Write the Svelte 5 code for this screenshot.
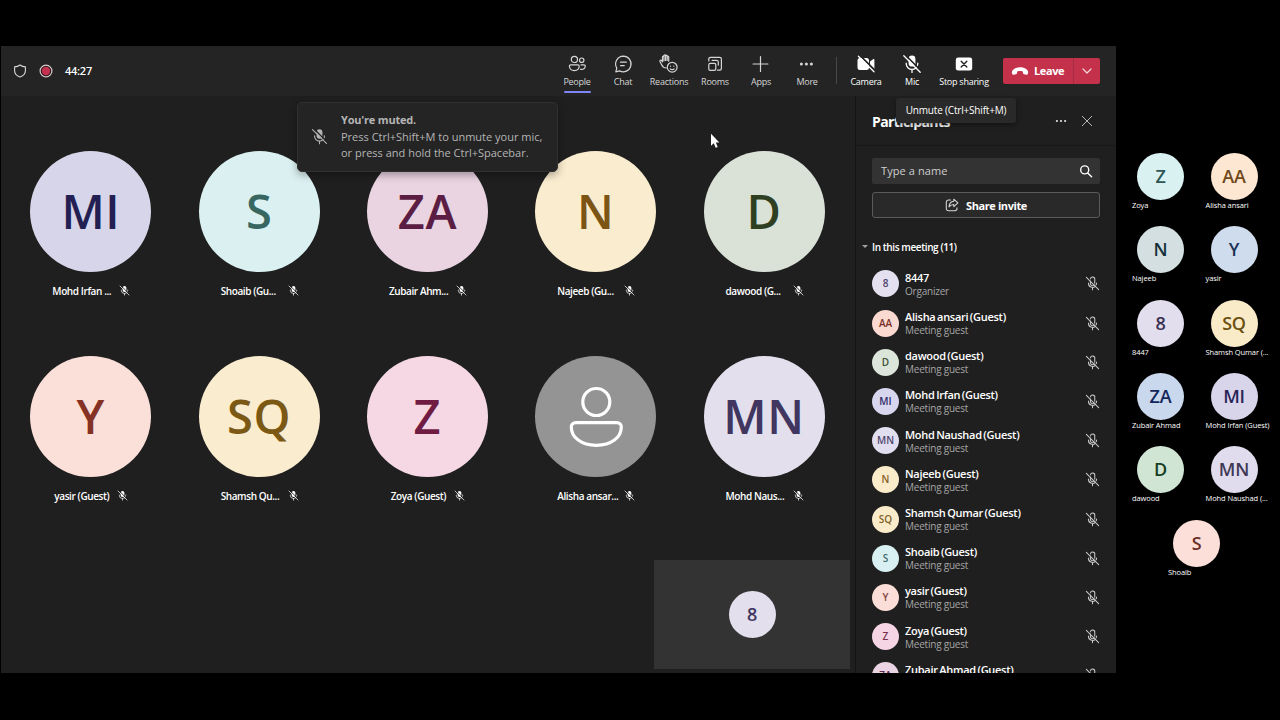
<script>
  const tools = [
    { id: 'people', label: 'People', active: true },
    { id: 'chat', label: 'Chat' },
    { id: 'reactions', label: 'Reactions' },
    { id: 'rooms', label: 'Rooms' },
    { id: 'apps', label: 'Apps' },
    { id: 'more', label: 'More' }
  ];

  const tiles = [
    { initials: 'MI', label: 'Mohd Irfan ...', bg: '#d7d5e9', fg: '#231f52', cut: true },
    { initials: 'S', label: 'Shoaib (Gu...', bg: '#dbf1f1', fg: '#386661', cut: true },
    { initials: 'ZA', label: 'Zubair Ahm...', bg: '#ead4e2', fg: '#5b1d43', cut: true },
    { initials: 'N', label: 'Najeeb (Gu...', bg: '#faeccf', fg: '#7c5515', cut: true },
    { initials: 'D', label: 'dawood (G...', bg: '#dae2d8', fg: '#2f4022', cut: true },
    { initials: 'Y', label: 'yasir (Guest)', bg: '#fbe0da', fg: '#853225' },
    { initials: 'SQ', label: 'Shamsh Qu...', bg: '#faeccf', fg: '#7b5814', cut: true },
    { initials: 'Z', label: 'Zoya (Guest)', bg: '#f5d8e3', fg: '#6f1b42' },
    { initials: '', label: 'Alisha ansar...', bg: '#949494', fg: '#ffffff', cut: true },
    { initials: 'MN', label: 'Mohd Naus...', bg: '#e3dfed', fg: '#40365f', cut: true }
  ];

  const people = [
    { initials: '8', name: '8447', role: 'Organizer', bg: '#e4e0f0', fg: '#4a4168' },
    { initials: 'AA', name: 'Alisha ansari (Guest)', bg: '#f9d9d0', fg: '#7b3228' },
    { initials: 'D', name: 'dawood (Guest)', bg: '#dbe5da', fg: '#3e5135' },
    { initials: 'MI', name: 'Mohd Irfan (Guest)', bg: '#d7d6ee', fg: '#302b68' },
    { initials: 'MN', name: 'Mohd Naushad (Guest)', bg: '#e1def0', fg: '#50466f' },
    { initials: 'N', name: 'Najeeb (Guest)', bg: '#faecca', fg: '#84622a' },
    { initials: 'SQ', name: 'Shamsh Qumar (Guest)', bg: '#faecca', fg: '#80632a' },
    { initials: 'S', name: 'Shoaib (Guest)', bg: '#d8f0f1', fg: '#3e6c6c' },
    { initials: 'Y', name: 'yasir (Guest)', bg: '#fbded7', fg: '#81463b' },
    { initials: 'Z', name: 'Zoya (Guest)', bg: '#f5d5e4', fg: '#78304f' },
    { initials: 'ZA', name: 'Zubair Ahmad (Guest)', bg: '#ead3e2', fg: '#602a4c' }
  ];

  const roster = [
    { initials: 'Z', name: 'Zoya', bg: '#d9f1f1', fg: '#2e5553' },
    { initials: 'AA', name: 'Alisha ansari', bg: '#fde6d2', fg: '#704719' },
    { initials: 'N', name: 'Najeeb', bg: '#d3dfe1', fg: '#153039' },
    { initials: 'Y', name: 'yasir', bg: '#cedced', fg: '#1d3254' },
    { initials: '8', name: '8447', bg: '#e2deed', fg: '#3a3050' },
    { initials: 'SQ', name: 'Shamsh Qumar (...', bg: '#f9eac8', fg: '#6b4f10' },
    { initials: 'ZA', name: 'Zubair Ahmad', bg: '#c9d8ec', fg: '#13265c' },
    { initials: 'MI', name: 'Mohd Irfan (Guest)', bg: '#d8d5ea', fg: '#292457' },
    { initials: 'D', name: 'dawood', bg: '#d1e5d5', fg: '#153d1f' },
    { initials: 'MN', name: 'Mohd Naushad (...', bg: '#e0dced', fg: '#403757' },
    { initials: 'S', name: 'Shoaib', bg: '#fbdfd8', fg: '#6b2f29' }
  ];
</script>

{#snippet micFilled(size, back)}
  <svg width={size} height={size} viewBox="0 0 20 20" fill="none" stroke-linecap="round">
    <rect x="6.6" y="1.6" width="6.8" height="11" rx="3.4" fill="currentColor" />
    <path d="M4.2 9.2v.4a5.8 5.8 0 0 0 11.6 0v-.4M10 15.6V18.4" stroke="currentColor" stroke-width="1.3" />
    <path d="M3.4 1l15.6 15.6" stroke={back} stroke-width="1.6" />
    <path d="M1.8 1.8l16.4 16.4" stroke="currentColor" stroke-width="1.3" />
  </svg>
{/snippet}

{#snippet micOutline()}
  <svg width="15" height="15" viewBox="0 0 20 20" fill="none" stroke="currentColor" stroke-width="1.4" stroke-linecap="round">
    <path d="M7.2 6.8V10a2.9 2.9 0 0 0 5 2M7.3 3.8A2.9 2.9 0 0 1 13 4.9v4.7" />
    <path d="M4.6 9.2v.4a5.4 5.4 0 0 0 9.4 3.8M15.4 9.2c0 1-.1 1.7-.5 2.5M10 15.2V18.4" />
    <path d="M1.8 1.8l16.4 16.4" />
  </svg>
{/snippet}

{#snippet toolIcon(id)}
  <svg width="20" height="20" viewBox="0 0 20 20" fill="none" stroke="currentColor" stroke-width="1.2" stroke-linecap="round" stroke-linejoin="round">
    {#if id === 'people'}
      <circle cx="7.4" cy="5.400" r="3.1" />
      <circle cx="14.700" cy="6.200" r="2.2" />
      <path d="M3.700 10.800h7.200c.8 0 1.300.6 1.300 1.300 0 2.700-2 4.500-4.900 4.500s-4.900-1.800-4.900-4.500c0-.7.6-1.300 1.300-1.300zM14 10.800h3c.8 0 1.300.6 1.300 1.300 0 2.300-1.900 3.700-4.800 3.300" />
    {:else if id === 'chat'}
      <path d="M10.300 2.200a7.800 7.800 0 1 1-3.700 14.700L2.800 17.800l1-3.700A7.800 7.800 0 0 1 10.300 2.200zM7.500 8.200h5.800M7.500 11.600h3.800" />
    {:else if id === 'reactions'}
      <circle cx="13.200" cy="13.2" r="4.9" />
      <path d="M11.300 14.800c1 1.100 2.800 1.100 3.800 0M11.500 12v.2M14.900 12v.2" />
      <path d="M7.300 14c-2.300 0-3.800-1.200-4.700-3.200L1 7.400c-.4-1 .8-1.700 1.500-.9l1 1.300V3c0-1.100 1.500-1.100 1.500 0V1.700c0-1.100 1.600-1.100 1.600 0V2c0-1 1.600-1 1.600 0v1.200c0-1 1.500-1 1.500 0v4M5 2.800v4M6.600 2v4.500M8.200 2.800v3.700" />
    {:else if id === 'rooms'}
      <path d="M3.800 7V5a1.700 1.700 0 0 1 1.700-1.700h9.200A1.700 1.700 0 0 1 16.400 5v9.500a1.700 1.700 0 0 1-1.700 1.700h-2.200" />
      <path d="M7.200 6.400h4.400a1.700 1.700 0 0 1 1.700 1.700v3" />
      <rect x="3.800" y="9.300" width="7" height="7" rx="1.400" />
    {:else if id === 'apps'}
      <path d="M9.500 2.600v14.800M2.100 10h14.800" />
    {:else}
      <g fill="currentColor" stroke="none">
        <circle cx="4.400" cy="10" r="1.500" /><circle cx="9.400" cy="10" r="1.500" /><circle cx="14.400" cy="10" r="1.500" />
      </g>
    {/if}
  </svg>
{/snippet}

<div class="screen">
  <main class="window">
    <header class="toolbar">
      <div class="status">
        <svg width="14" height="14" viewBox="0 0 14 14" fill="none" stroke="#d8d8d8" stroke-width="1.1" stroke-linejoin="round">
          <path d="M7 1c1.600 1.200 3.300 1.800 5.400 1.900v3.800c0 2.900-1.800 5-5.400 6.300-3.600-1.300-5.400-3.400-5.400-6.300V2.900C3.700 2.800 5.400 2.200 7 1z" />
        </svg>
        <svg width="14" height="14" viewBox="0 0 14 14">
          <circle cx="7" cy="7" r="5.900" fill="#241b1e" stroke="#ddc9cb" stroke-width="1.200" />
          <circle cx="7" cy="7" r="4.200" fill="#c4314f" />
        </svg>
        <span class="timer">44:27</span>
      </div>
      <nav class="tools">
        {#each tools as tool}
          <button class="tool" class:active={tool.active}>
            {@render toolIcon(tool.id)}
            <span>{tool.label}</span>
          </button>
        {/each}
        <i class="divider"></i>
        <button class="tool bright">
          <svg width="20" height="20" viewBox="0 0 20 20" stroke-linecap="round">
            <path fill="currentColor" d="M4 4h6.500a2.500 2.500 0 0 1 2.500 2.500v7a2.500 2.500 0 0 1-2.500 2.500H4A2.500 2.500 0 0 1 1.500 13.500v-7A2.500 2.500 0 0 1 4 4zM14 7.500l3.400-2.400c.5-.3 1 0 1 .5v8.800c0 .5-.5.8-1 .5L14 12.500z" />
            <path d="M4.200 1.600l14.600 14.600" stroke="#242424" stroke-width="1.700" />
            <path d="M2.400 2.200l15.600 15.600" stroke="currentColor" stroke-width="1.300" />
          </svg>
          <span>Camera</span>
        </button>
        <button class="tool bright">
          {@render micFilled(20, '#242424')}
          <span>Mic</span>
        </button>
        <button class="tool bright wide">
          <svg width="20" height="20" viewBox="0 0 20 20">
            <rect x="1.800" y="3.600" width="16.400" height="13" rx="2.400" fill="currentColor" />
            <path d="M7.200 7.300l5.600 5.600M12.800 7.300l-5.600 5.600" stroke="#242424" stroke-width="1.400" stroke-linecap="round" />
          </svg>
          <span>Stop sharing</span>
        </button>
      </nav>
      <div class="leave">
        <button class="leave-main">
          <svg width="18" height="10" viewBox="0 0 18 10" fill="#fff">
            <path d="M9 1.300c3.900 0 7.400 1.700 8 4.300.2 1 .1 1.800-.2 2.500-.2.500-.7.700-1.200.6l-2.500-.5c-.6-.1-.9-.5-1-1L11.700 5.500C10 4.900 8 4.900 6.300 5.500L5.900 7.200c-.1.500-.4.900-1 1l-2.500.5c-.5.1-1-.1-1.200-.6C.9 7.400.8 6.600 1 5.600 1.600 3 5.100 1.300 9 1.300z" />
          </svg>
          <span>Leave</span>
        </button>
        <button class="leave-more" aria-label="Leave options">
          <svg width="10" height="10" viewBox="0 0 10 10" fill="none" stroke="#f4d5db" stroke-width="1.200" stroke-linecap="round" stroke-linejoin="round"><path d="M1 3l4 4 4-4" /></svg>
        </button>
      </div>
    </header>

    <div class="body">
      <section class="stage">
        <div class="grid">
          {#each tiles as tile}
            <div class="tile">
              <div class="avatar big" style="background:{tile.bg};color:{tile.fg}">
                {#if tile.initials}
                  {tile.initials}
                {:else}
                  <svg width="54" height="62" viewBox="0 0 54 62" fill="none" stroke="#fff" stroke-width="3.200">
                    <circle cx="27.300" cy="17" r="13.500" />
                    <path d="M6.800 37.700h41c2.700 0 4.500 1.700 4.500 4.200C52.300 52.500 42.300 60.300 27.300 60.300S2.300 52.500 2.300 41.900c0-2.500 1.800-4.200 4.500-4.200z" />
                  </svg>
                {/if}
              </div>
              <div class="caption">
                <span class:cut={tile.cut}>{tile.label}</span>
                {@render micFilled(11, '#1f1f1f')}
              </div>
            </div>
          {/each}
        </div>
        <div class="self"><div class="avatar mid" style="background:#e3dfed;color:#40365f">8</div></div>

        <div class="toast">
          {@render micFilled(17, '#242424')}
          <div>
            <strong>You're muted.</strong>
            <p>Press Ctrl+Shift+M to unmute your mic,</p>
            <p>or press and hold the Ctrl+Spacebar.</p>
          </div>
        </div>
        <svg class="cursor" width="10" height="16" viewBox="0 0 10 16"><path d="M1 .8v12l2.800-2.500 1.900 4.500 2-.9-1.900-4.300h3.500z" fill="#fff" /></svg>
      </section>

      <aside class="panel">
        <div class="panel-head">
          <h2>Participants</h2>
          <svg width="12" height="12" viewBox="0 0 12 12" fill="#e0e0e0"><circle cx="1.900" cy="6" r="1.100" /><circle cx="6" cy="6" r="1.100" /><circle cx="10.100" cy="6" r="1.100" /></svg>
          <svg width="12" height="12" viewBox="0 0 12 12" stroke="#b8b8b8" stroke-width="1" stroke-linecap="round"><path d="M1.300 1.300l9.400 9.400M10.700 1.300L1.300 10.700" /></svg>
        </div>
        <div class="panel-body">
          <div class="search">
            <span>Type a name</span>
            <svg width="14" height="14" viewBox="0 0 14 14" fill="none" stroke="#fff" stroke-width="1.400" stroke-linecap="round"><circle cx="5.700" cy="5.900" r="4" /><path d="M8.700 8.900l3.900 3.900" /></svg>
          </div>
          <button class="invite">
            <svg width="14" height="14" viewBox="0 0 14 14" fill="none" stroke="#d8d8d8" stroke-width="1.050" stroke-linecap="round" stroke-linejoin="round">
              <path d="M5.600 2H3.500A2.200 2.200 0 0 0 1.300 4.200v6.300a2.200 2.200 0 0 0 2.200 2.200h6.300a2.200 2.200 0 0 0 2.200-2.200v-.8" />
              <path d="M8.800 1.200l4.100 3.700-4.100 3.700V6.500C6.700 6.500 5.200 7.200 4 8.900c.2-3.200 1.900-5.300 4.800-5.600z" />
            </svg>
            <span>Share invite</span>
          </button>
          <h3><i class="caret"></i>In this meeting (11)</h3>
          <ul>
            {#each people as p}
              <li>
                <div class="avatar small" style="background:{p.bg};color:{p.fg}">{p.initials}</div>
                <div class="who">
                  <b>{p.name}</b>
                  <span>{p.role ?? 'Meeting guest'}</span>
                </div>
                {@render micOutline()}
              </li>
            {/each}
          </ul>
        </div>
        <div class="tooltip">Unmute (Ctrl+Shift+M)</div>
      </aside>
    </div>
  </main>

  <aside class="roster">
    {#each roster as r, i}
      <div class="member" class:last={i === roster.length - 1}>
        <div class="avatar mid" style="background:{r.bg};color:{r.fg}">{r.initials}</div>
        <span>{r.name}</span>
      </div>
    {/each}
  </aside>
</div>

<style>
  :global(body) { background: #000; overflow: hidden; }
  .screen {
    width: 1280px; height: 720px; box-sizing: border-box; padding: 46px 0 47px 1px;
    display: flex; background: #000; color: #fff; overflow: hidden;
    font-family: "Open Sans", "Noto Sans", sans-serif;
  }
  .screen :global(svg) { display: block; flex: none; }
  button { font: inherit; color: inherit; background: none; border: 0; padding: 0; margin: 0; }
  h2, h3, p, ul { margin: 0; padding: 0; }

  .window { width: 1115px; height: 627px; display: flex; flex-direction: column; background: #1f1f1f; overflow: hidden; flex: none; }

  .toolbar { height: 50px; flex: none; display: flex; align-items: center; background: #242424; }
  .status { width: 553px; height: 49px; margin-bottom: 1px; display: flex; align-items: center; padding-left: 11.500px; gap: 12px; box-sizing: border-box; }
  .timer { font-size: 11px; font-weight: 600; letter-spacing: -0.250px; line-height: 14px; margin-left: 0.500px; }
  .tools { display: flex; height: 50px; }
  .tool {
    width: 46px; height: 50px; display: flex; flex-direction: column; align-items: center;
    padding-top: 8px; box-sizing: border-box; position: relative; color: #d6d6d6;
  }
  .tool span { font-size: 9px; line-height: 12px; margin-top: 2px; letter-spacing: -0.250px; font-weight: 500; white-space: nowrap; }
  .tool.active::after { content: ""; position: absolute; left: 10px; right: 9px; bottom: 3px; height: 2px; border-radius: 1px; background: #7f85f5; }
  .bright { color: #fff; }
  .wide { width: 58px; }
  .divider { width: 1px; height: 27px; margin: 11px 6px 0 6px; background: #484848; }
  .leave { display: flex; margin: 0 0 1px 10px; height: 26px; width: 97px; background: #c4314b; border-radius: 2px; }
  .leave-main { width: 71px; box-sizing: border-box; display: flex; align-items: center; gap: 5px; padding-left: 8px; border-right: 1px solid #a42e44; font-size: 11px; font-weight: 700; letter-spacing: -0.400px; }
  .leave-more { flex: 1; display: flex; align-items: center; justify-content: center; }

  .body { flex: 1; display: flex; min-height: 0; }
  .stage { width: 854px; position: relative; display: flex; flex-direction: column; }
  .grid { display: grid; grid-template-columns: repeat(5, 168.300px); grid-auto-rows: 205px; padding: 55.300px 0 0 5.700px; }
  .tile { display: flex; flex-direction: column; align-items: center; }
  .avatar { border-radius: 50%; display: flex; align-items: center; justify-content: center; flex: none; font-weight: 600; line-height: 1; box-sizing: border-box; }
  .big { width: 121px; height: 121px; font-size: 47px; letter-spacing: 0.600px; padding-bottom: 1px; }
  .mid { width: 47px; height: 47px; font-size: 18px; font-weight: 600; letter-spacing: -0.200px; padding-bottom: 1px; }
  .small { width: 27px; height: 27px; font-size: 10px; padding-bottom: 1px; }
  .caption { display: flex; align-items: center; gap: 8px; margin: 11px 0 0 1px; height: 15px; font-size: 10px; letter-spacing: -0.400px; font-weight: 600; white-space: nowrap; }
  .cut { width: 59px; }
  .self { width: 196px; height: 109px; margin: -1px 0 0 653px; background: #333; display: flex; align-items: center; justify-content: center; }

  .toast {
    position: absolute; left: 296px; top: 5.500px; width: 261px; height: 70px; box-sizing: border-box;
    display: flex; align-items: center; gap: 13px; padding-left: 13px; background: #242424;
    border: 1px solid #303030; border-radius: 5px; color: #b5b5b5; font-size: 11px; line-height: 16.400px; letter-spacing: 0; white-space: nowrap;
    box-shadow: 0 3px 8px #0005;
  }
  .toast > div { padding-top: 0.600px; }
  .toast strong { display: block; font-weight: 700; letter-spacing: -0.200px; }
  .cursor { position: absolute; left: 708.500px; top: 37px; }

  .panel { width: 261px; box-sizing: border-box; position: relative; border-left: 1px solid #141414; display: flex; flex-direction: column; }
  .panel-head { height: 50px; box-sizing: border-box; border-bottom: 1px solid #181818; display: flex; align-items: center; gap: 14px; padding: 1px 23px 0 16px; flex: none; }
  h2 { flex: 1; font-size: 14px; font-weight: 700; letter-spacing: -0.600px; }
  .panel-body { flex: 1; min-height: 0; overflow: hidden; padding: 11.500px 15px 0 16px; }
  .search { height: 26px; width: 228px; box-sizing: border-box; background: #333; border-radius: 2px; display: flex; align-items: center; justify-content: space-between; padding: 0 7px 0 9px; font-size: 11px; color: #cfcfcf; letter-spacing: 0.100px; }
  .search span { padding-bottom: 1px; }
  .invite { width: 228px; height: 26px; box-sizing: border-box; margin-top: 8.500px; display: flex; align-items: center; justify-content: center; gap: 7px; background: #292929; border: 1px solid #5a5a5a; border-radius: 3px; font-size: 11px; font-weight: 700; letter-spacing: -0.400px; }
  h3 { margin-top: 21px; height: 16px; line-height: 16px; font-size: 10px; font-weight: 600; letter-spacing: -0.400px; position: relative; }
  .caret { position: absolute; left: -10px; top: 6px; border: 3px solid transparent; border-top-color: #a0a0a0; border-bottom: 0; }
  ul { list-style: none; margin-top: 9.300px; }
  li { height: 39.200px; width: 228px; display: flex; align-items: center; color: #c8c8c8; }
  .who { flex: 1; margin-left: 6px; padding-top: 1px; display: flex; flex-direction: column; white-space: nowrap; }
  .who b { font-size: 11px; line-height: 14px; font-weight: 600; color: #fff; letter-spacing: -0.280px; word-spacing: -1px; }
  .who span { font-size: 10px; line-height: 13px; color: #a5a5a5; letter-spacing: -0.220px; }
  .tooltip { position: absolute; left: 40px; top: 2px; width: 120px; height: 25px; line-height: 25px; text-align: center; background: #292929; border-radius: 3px; font-size: 10px; letter-spacing: -0.180px; white-space: nowrap; box-shadow: 0 2px 5px #0006; }

  .roster { display: grid; grid-template-columns: 73.500px 73.500px; grid-auto-rows: 73.300px; padding: 107.200px 0 0 16px; align-content: start; }
  .member .avatar { margin-left: 5px; }
  .member span { display: block; font-size: 7.500px; line-height: 10px; letter-spacing: -0.100px; white-space: nowrap; }
  .last { margin-left: 36px; }
</style>
